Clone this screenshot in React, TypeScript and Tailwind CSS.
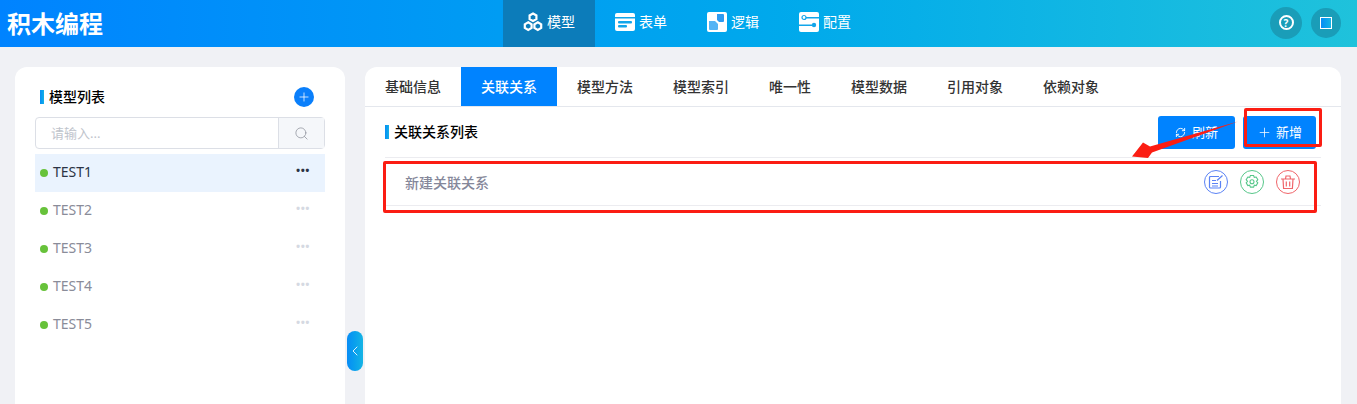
import { ChevronLeft, Plus, RefreshCw, Search } from "lucide-react";

const FONT = { fontFamily: '"Noto Sans","Noto Sans CJK SC",sans-serif' };

const NAV = ["模型", "表单", "逻辑", "配置"];
const TABS = ["基础信息", "关联关系", "模型方法", "模型索引", "唯一性", "模型数据", "引用对象", "依赖对象"];
const MODELS = ["TEST1", "TEST2", "TEST3", "TEST4", "TEST5"];

const NavIcon = ({ name }: { name: string }) => {
  if (name === "模型") {
    return (
      <svg width="20" height="20" viewBox="0 0 20 20" fill="none" stroke="#fff" strokeWidth="2.2">
        <path d="M10 1.5l3.4 2v3.6L10 9 6.6 7.100V3.500z" />
        <path d="M5.200 10.300l3.400 2v3.600l-3.400 2-3.400-2v-3.600z" />
        <path d="M14.800 10.300l3.400 2v3.600l-3.400 2-3.400-2v-3.600z" />
      </svg>
    );
  }
  if (name === "表单") {
    return (
      <svg width="20" height="20" viewBox="0 0 20 20">
        <rect y="1" width="20" height="18" rx="2" fill="#fff" />
        <rect x="0" y="5" width="20" height="1.500" fill="#12a5ea" />
        <rect x="3" y="9" width="14" height="2.500" rx="1" fill="#12a5ea" />
        <rect x="3" y="13" width="9" height="2.500" rx="1" fill="#12a5ea" />
      </svg>
    );
  }
  if (name === "逻辑") {
    return (
      <svg width="20" height="20" viewBox="0 0 20 20">
        <rect width="20" height="20" rx="2" fill="#fff" />
        <path d="M10 2h6a1 1 0 0 1 1 1v6a1 1 0 0 1-1 1h-4l-2-2z" fill="#2f9bf0" />
        <path d="M2 9h6l3 3v5a1 1 0 0 1-1 1H3a1 1 0 0 1-1-1z" fill="#55b4f5" />
      </svg>
    );
  }
  return (
    <svg width="20" height="20" viewBox="0 0 20 20">
      <rect width="20" height="20" rx="2" fill="#fff" />
      <rect x="7" y="5" width="13" height="1.500" fill="#12a5ea" />
      <circle cx="5" cy="5.500" r="2" fill="#fff" stroke="#12a5ea" strokeWidth="1.200" />
      <rect x="0" y="12.500" width="13" height="1.500" fill="#12a5ea" />
      <circle cx="15" cy="13" r="2.200" fill="#12a5ea" />
    </svg>
  );
};

const EditIcon = () => (
  <svg width="16" height="16" viewBox="0 0 16 16" fill="none" stroke="#5b83f5" strokeWidth="1.200">
    <path d="M11 2.500H2.500a1 1 0 0 0-1 1v9.500a1 1 0 0 0 1 1h9a1 1 0 0 0 1-1V7" />
    <path d="M4 6.500h4M4 9.500h6M4 12h6" />
    <path d="M9 6.500L14.500 1.500" />
  </svg>
);

const GearIcon = () => (
  <svg width="16" height="16" viewBox="0 0 16 16" fill="none" stroke="#57c78a" strokeWidth="1.100">
    <path d="M6.400 1.500h3.200l.7 1.900 1.900-.4 1.600 2.800-1.300 1.500 1.300 1.500-1.600 2.800-1.900-.4-.7 1.900H6.400l-.7-1.900-1.900.4-1.600-2.800 1.300-1.500-1.300-1.500L3.800 3l1.900.4z" />
    <circle cx="8" cy="7.800" r="2" />
  </svg>
);

const TrashIcon = () => (
  <svg width="16" height="16" viewBox="0 0 16 16" fill="none" stroke="#f0656a" strokeWidth="1.200">
    <path d="M1 5h14M5.500 5L6 2h4l.5 3" />
    <path d="M3 5l.6 9.500h8.800L13 5" />
    <path d="M6.300 7.500v5M9.700 7.500v5" />
  </svg>
);

const SectionTitle = ({ text }: { text: string }) => (
  <div className="flex items-center gap-[5px]">
    <span className="w-1 h-[14px] bg-gradient-to-r from-[#0a8cf5] to-[#16b0e6]" />
    <span className="text-sm leading-5 font-medium text-black">{text}</span>
  </div>
);

export default function App() {
  return (
    <div className="relative w-[1357px] h-[404px] overflow-hidden bg-[#f0f1f5]" style={FONT}>
      {/* header */}
      <header className="flex items-center h-[47px] bg-gradient-to-r from-[#0083ff] to-[#1fc2db]">
        <div className="w-[503px] shrink-0 pl-[7px] text-2xl leading-[47px] font-bold text-white">积木编程</div>
        <nav className="flex h-full">
          {NAV.map((item, i) => (
            <div
              key={item}
              className={`flex items-center gap-1 w-[92px] px-5 pb-1 text-sm text-white ${i === 0 ? "bg-[#0c7cba]" : ""}`}
            >
              <NavIcon name={item} />
              <span>{item}</span>
            </div>
          ))}
        </nav>
        <div className="flex items-center gap-[9px] ml-auto mr-[16px] mb-[2px]">
          <div className="flex items-center justify-center w-8 h-8 rounded-full bg-[#1a9db8]">
            <span className="flex items-center justify-center w-[15px] h-[15px] rounded-full border-2 border-white text-[10px] leading-none font-bold text-white">
              ?
            </span>
          </div>
          <div className="flex items-center justify-center w-[30px] h-[30px] rounded-full bg-[#1a9db8]">
            <span className="w-3 h-3 border border-white bg-gradient-to-r from-[#0a8cf5] to-[#18b4e4]" />
          </div>
        </div>
      </header>

      <div className="flex gap-5 pl-[15px] pr-4 pt-5">
        {/* model list */}
        <aside className="w-[330px] h-[400px] shrink-0 rounded-t-xl bg-white px-5 pt-5">
          <div className="flex items-center justify-between pl-[5px] pr-[11px] h-5">
            <SectionTitle text="模型列表" />
            <span className="flex items-center justify-center w-5 h-5 rounded-full bg-[#0a7ffb]">
              <Plus size={14} color="#fff" strokeWidth={1.300} />
            </span>
          </div>
          <div className="flex h-[32px] mt-[10px] rounded border border-[#dcdfe6]">
            <div className="flex-1 pl-[15px] text-[13px] leading-[30px] text-[#c0c4cc]">请输入...</div>
            <div className="flex items-center justify-center w-[46px] border-l border-[#dcdfe6] bg-[#f5f7fa]">
              <Search size={15} color="#8c9099" strokeWidth={1.200} />
            </div>
          </div>
          <ul className="mt-[5px]">
            {MODELS.map((name, i) => (
              <li
                key={name}
                className={`flex items-center h-[38px] pl-[5px] pr-[15px] text-sm ${i === 0 ? "bg-[#eaf3fe] text-[#2c3345]" : "text-[#8a8c99]"}`}
              >
                <span className="w-2 h-2 rounded-full bg-[#67c23a]" />
                <span className="ml-[5px] flex-1 pb-[2px]">{name}</span>
                <span className={`mb-[8px] text-[11px] leading-none font-bold tracking-[0.5px] ${i === 0 ? "text-[#2c3345]" : "text-[#d5d9e2]"}`}>
                  •••
                </span>
              </li>
            ))}
          </ul>
        </aside>

        {/* detail panel */}
        <main className="flex-1 h-[400px] rounded-t-xl bg-white">
          <div className="flex h-10 border-b border-[#e4e7ed]">
            {TABS.map((tab, i) => (
              <div
                key={tab}
                className={`px-5 text-[14px] leading-[39px] font-medium ${i === 1 ? "bg-[#0083ff] text-white" : "text-[#333]"}`}
              >
                {tab}
              </div>
            ))}
          </div>
          <div className="pl-5 pr-5">
            <div className="flex items-center justify-between h-[51px] pt-[1px] border-b border-[#ececf0]">
              <div className="-mt-[1px]">
                <SectionTitle text="关联关系列表" />
              </div>
              <div className="flex gap-2 mr-[5px]">
                <button className="flex items-center justify-center gap-[6px] w-[77px] h-[33px] rounded-[3px] bg-[#0083ff] text-[13px] text-white">
                  <RefreshCw size={11} />
                  刷新
                </button>
                <button className="flex items-center justify-center gap-1 w-[73px] h-[33px] rounded-[3px] bg-[#0083ff] text-[13px] text-white">
                  <Plus size={15} strokeWidth={1.200} />
                  新增
                </button>
              </div>
            </div>
            <div className="flex items-center justify-between h-[48px] pl-5 pr-[21px] border-b border-[#ececf0]">
              <span className="pt-[2px] text-sm font-medium text-[#85879a]">新建关联关系</span>
              <div className="flex gap-3">
                <span className="flex items-center justify-center w-6 h-6 rounded-full border border-[#5b83f5]">
                  <EditIcon />
                </span>
                <span className="flex items-center justify-center w-6 h-6 rounded-full border border-[#57c78a]">
                  <GearIcon />
                </span>
                <span className="flex items-center justify-center w-6 h-6 rounded-full border border-[#f0656a]">
                  <TrashIcon />
                </span>
              </div>
            </div>
          </div>
        </main>
      </div>

      {/* collapse handle */}
      <div className="absolute left-[347px] top-[331px] flex items-center justify-center w-4 h-10 rounded-lg bg-gradient-to-r from-[#0a8cf5] to-[#16b4e4]">
        <ChevronLeft size={18} color="#fff" strokeWidth={1.300} />
      </div>

      {/* red annotation marks */}
      <div className="absolute left-[1244px] top-[108px] w-[78px] h-[39px] rounded-[2px] border-[3px] border-[#fb1d13]" />
      <div className="absolute left-[383px] top-[161px] w-[934px] h-[52px] rounded-[2px] border-[3px] border-[#fb1d13]" />
      <svg className="absolute left-[1125px] top-[115px]" width="120" height="50" viewBox="0 0 120 50">
        <path d="M113 6.500L25 31.500L18 27.500L7 41.500L23 43L27 37.500z" fill="#fb1d13" />
      </svg>
    </div>
  );
}
